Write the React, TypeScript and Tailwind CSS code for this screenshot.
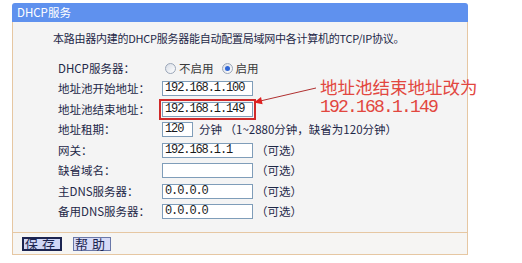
import React from "react";

const cjk = { fontFamily: '"Noto Sans CJK SC", "Liberation Sans", sans-serif' };
const mono = { fontFamily: '"Liberation Mono", "Noto Sans CJK SC", monospace' };

function Field({
  value,
  width = "w-[91px]",
  marked = false,
}: {
  value?: string;
  width?: string;
  marked?: boolean;
}) {
  return (
    <div
      className={`${width} h-[15px] border border-[#7f9db9] bg-white pl-[2px] text-[12px] leading-[13px] tracking-[-1.1px] text-[#1a1a1a] ${
        marked ? "outline-2 outline-offset-[1px] outline-[#d02a2a]" : ""
      }`}
      style={mono}
    >
      {value}
    </div>
  );
}

function Radio({ checked, label }: { checked?: boolean; label: string }) {
  return (
    <span className="flex items-center gap-[3px]">
      <span className="flex h-[11px] w-[11px] items-center justify-center rounded-full border border-[#9aa6b8] bg-gradient-to-br from-[#d8dde6] to-white">
        {checked && <span className="h-[5px] w-[5px] rounded-full bg-[#2f66d6]" />}
      </span>
      <span className="text-[11.5px] text-[#3a3a3a]">{label}</span>
    </span>
  );
}

function Row({ label, children }: { label: string; children: React.ReactNode }) {
  return (
    <div className="flex h-[20.5px] items-center">
      <span className="w-[104px] text-[11.5px] text-[#1e2848]">{label}</span>
      <div className="flex items-center gap-[6px] text-[11.5px] text-[#1e2848]">{children}</div>
    </div>
  );
}

export default function App() {
  return (
    <div className="relative h-[263px] w-[522px] overflow-hidden bg-white" style={cjk}>
      <div className="ml-[12px] pt-[3px] w-[456px]">
        <div className="h-[19px] rounded-t-[3px] bg-[#5f91ee] pl-[5px] text-[11.5px] leading-[19px] text-white">
          DHCP服务
        </div>
        <div className="border-x border-[#e6c7a2] bg-[#f4f4f4]">
          <p className="pl-[40px] pt-[8px] text-[11px] leading-[16px] tracking-[-0.25px] text-[#1e2848]">
            本路由器内建的DHCP服务器能自动配置局域网中各计算机的TCP/IP协议。
          </p>
          <div className="mt-[12px] flex flex-col pb-[10px] pl-[45px]">
            <Row label="DHCP服务器：">
              <span className="ml-[3px] flex items-center gap-[8px]">
                <Radio label="不启用" />
                <Radio checked label="启用" />
              </span>
            </Row>
            <Row label="地址池开始地址：">
              <Field value="192.168.1.100" />
            </Row>
            <Row label="地址池结束地址：">
              <Field value="192.168.1.149" marked />
            </Row>
            <Row label="地址租期：">
              <Field value="120" width="w-[31px]" />
              <span>分钟 （1~2880分钟，缺省为120分钟）</span>
            </Row>
            <Row label="网关：">
              <Field value="192.168.1.1" />
              <span className="-ml-[3px]">（可选）</span>
            </Row>
            <Row label="缺省域名：">
              <Field />
              <span className="-ml-[3px]">（可选）</span>
            </Row>
            <Row label="主DNS服务器：">
              <Field value="0.0.0.0" />
              <span className="-ml-[3px]">（可选）</span>
            </Row>
            <Row label="备用DNS服务器：">
              <Field value="0.0.0.0" />
              <span className="-ml-[3px]">（可选）</span>
            </Row>
          </div>
        </div>
        <div className="flex h-[23px] items-center gap-[11px] border border-[#e6c7a2] bg-[#f6f5f3] pl-[9px]">
          <button className="h-[14px] w-[40px] border-2 border-[#1c2450] bg-[#cfd6f6] text-[13px] leading-[10px] tracking-[4px] text-[#1c2450]">
            保存
          </button>
          <button className="h-[14px] w-[38px] border border-[#6a78a8] bg-[#d6daf7] text-[13px] leading-[12px] tracking-[4px] text-[#1c2450]">
            帮助
          </button>
        </div>
      </div>

      <svg className="pointer-events-none absolute inset-0" width="522" height="263">
        <line x1="316" y1="88" x2="261" y2="100.8" stroke="#b03030" strokeWidth="1" />
        <polygon points="254,102.5 262.6,104.2 261,97" fill="#e02020" />
      </svg>

      <div className="absolute left-[320px] top-[76px] text-[#e2473f]">
        <div className="text-[17.5px] leading-[22px]">地址池结束地址改为</div>
        <div className="text-[18px] leading-[19px] tracking-[-1.8px]" style={mono}>
          192.168.1.149
        </div>
      </div>
    </div>
  );
}
